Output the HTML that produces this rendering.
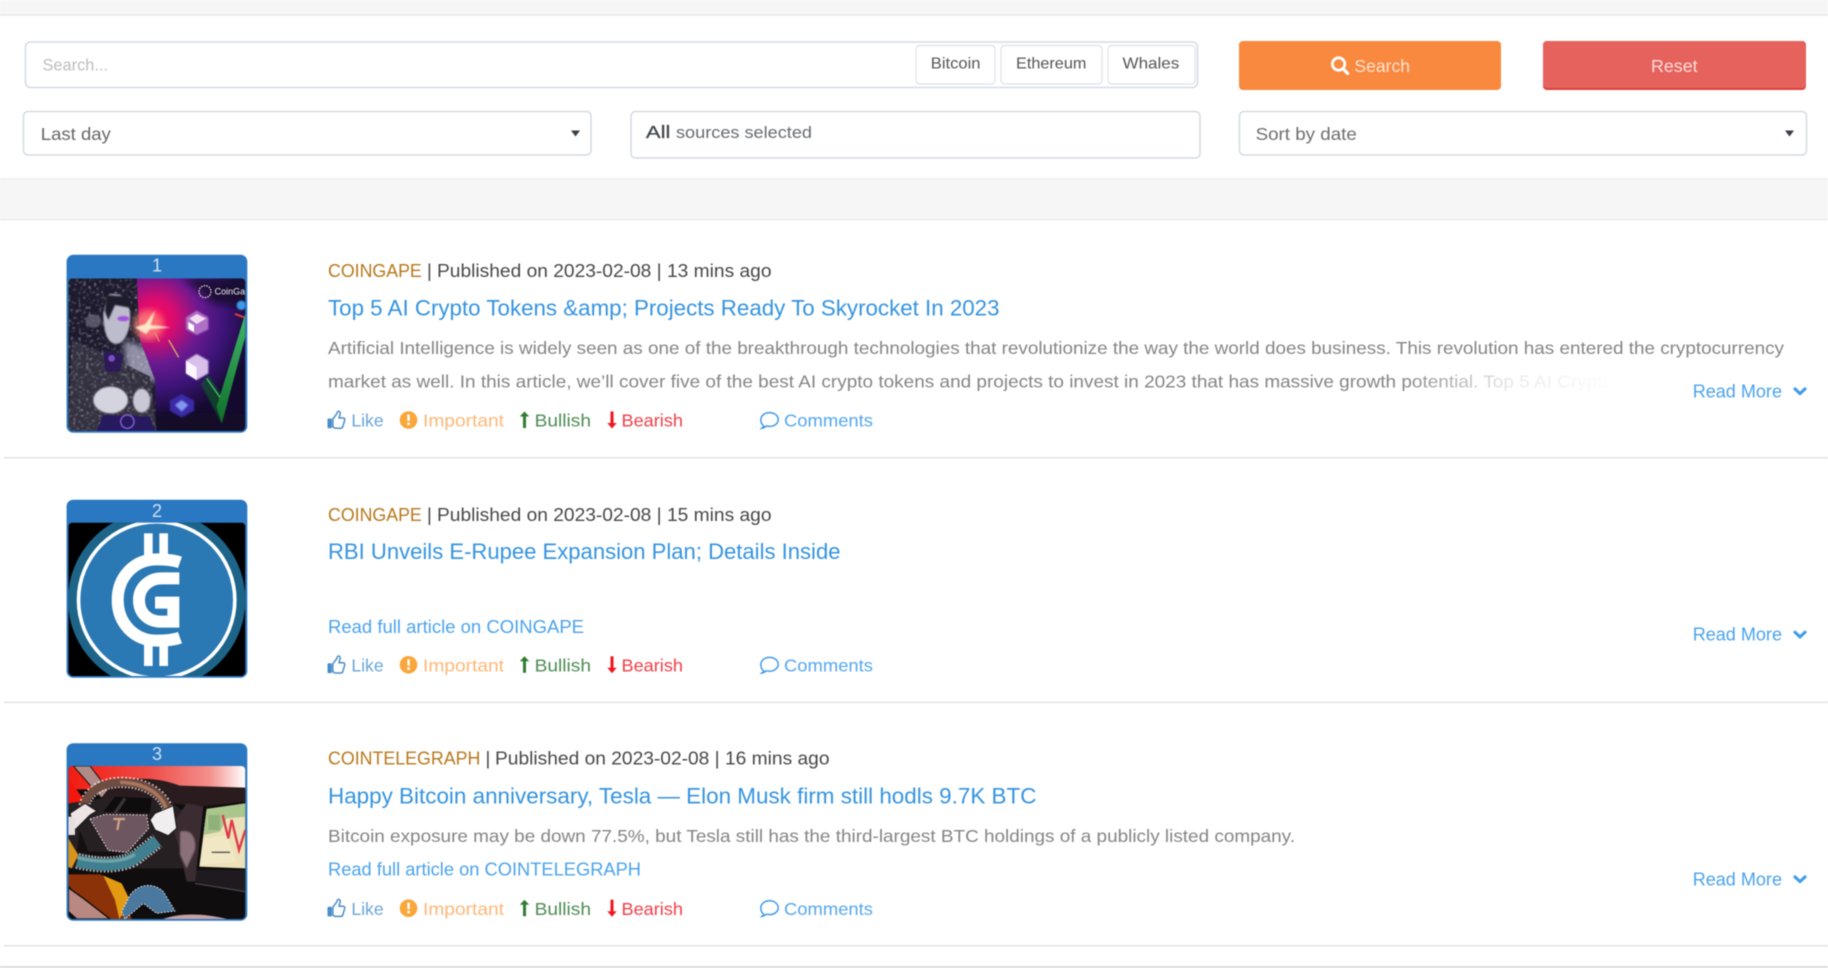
<!DOCTYPE html>
<html lang="en"><head><meta charset="utf-8"><title>News feed</title>
<style>
html,body{margin:0;padding:0;background:#fff;width:1828px;height:968px;overflow:hidden}
svg{display:block;filter:blur(.45px)}
text{font-family:"Liberation Sans",sans-serif}
</style></head><body>
<svg xmlns="http://www.w3.org/2000/svg" width="1828" height="968" viewBox="0 0 1828 968">
<defs>
<linearGradient id="fade" x1="0" x2="1" y1="0" y2="0"><stop offset="0" stop-color="#fff" stop-opacity="0"/><stop offset=".5" stop-color="#fff" stop-opacity=".82"/><stop offset="1" stop-color="#fff"/></linearGradient>
<radialGradient id="pink" gradientUnits="userSpaceOnUse" cx="345" cy="235" r="300"><stop offset="0" stop-color="#ff0a5a"/><stop offset=".2" stop-color="#d80c70"/><stop offset=".45" stop-color="#6a1a90"/><stop offset=".7" stop-color="#3c1478"/><stop offset="1" stop-color="#140a30"/></radialGradient>
<linearGradient id="vg" x1="0" x2="0" y1="0" y2="1"><stop offset="0" stop-color="#3fb868"/><stop offset="1" stop-color="#0f6e2a"/></linearGradient>
<linearGradient id="sky" x1="0" x2="1" y1="0" y2="0"><stop offset="0" stop-color="#f21c10"/><stop offset=".45" stop-color="#ee4a45"/><stop offset=".8" stop-color="#f4908c"/><stop offset="1" stop-color="#fff"/></linearGradient>
<clipPath id="c1"><rect x="85" y="115" width="531" height="458" rx="12"/></clipPath>
<clipPath id="c2"><rect x="85" y="98" width="531" height="460" rx="12"/></clipPath>
<clipPath id="c3"><rect x="85" y="93" width="531" height="459" rx="12"/></clipPath>
<clipPath id="woman"><path d="M85 115 H290 L300 300 L345 420 L350 573 H85z"/></clipPath>
<filter id="b2"><feGaussianBlur stdDeviation="2.5"/></filter>
<filter id="b8"><feGaussianBlur stdDeviation="10"/></filter>
<filter id="speck" x="0" y="0" width="100%" height="100%"><feTurbulence type="fractalNoise" baseFrequency=".13" numOctaves="2" seed="4"/><feColorMatrix values="0 0 0 0 .62  0 0 0 0 .6  0 0 0 0 .72  4 0 0 0 -2.2"/><feGaussianBlur stdDeviation="1.5"/></filter>
</defs>

<!-- page background -->
<rect width="1828" height="968" fill="#fff"/>
<rect width="1828" height="15" fill="#f6f6f6"/>
<rect y="14" width="1828" height="2" fill="#ececec"/>
<rect y="178" width="1828" height="42" fill="#f6f6f6"/>
<rect y="178" width="1828" height="1.6" fill="#eeeeee"/>
<rect y="219" width="1828" height="1.5" fill="#ececec"/>

<!-- search row -->
<rect x="25.5" y="42" width="1172" height="45.5" rx="5" fill="#fff" stroke="#d5dbe6" stroke-width="1.6"/>
<text x="42.5" y="70.3" font-size="17" fill="#bdbdbd" textLength="65.5" lengthAdjust="spacingAndGlyphs">Search...</text>
<rect x="916" y="45.5" width="79" height="38.5" rx="3.5" fill="#fff" stroke="#e2e6ec" stroke-width="1.4"/>
<rect x="1001" y="45.5" width="101" height="38.5" rx="3.5" fill="#fff" stroke="#e2e6ec" stroke-width="1.4"/>
<rect x="1108" y="45.5" width="87" height="38.5" rx="3.5" fill="#fff" stroke="#e2e6ec" stroke-width="1.4"/>
<text x="930.8" y="68.7" font-size="16" fill="#555" textLength="49.7" lengthAdjust="spacingAndGlyphs">Bitcoin</text>
<text x="1016" y="68.7" font-size="16" fill="#555" textLength="70.4" lengthAdjust="spacingAndGlyphs">Ethereum</text>
<text x="1122.5" y="68.7" font-size="16" fill="#555" textLength="56.8" lengthAdjust="spacingAndGlyphs">Whales</text>

<rect x="1239" y="41" width="262" height="49" rx="4" fill="#f8893f"/>
<circle cx="1338.6" cy="64" r="6.2" fill="none" stroke="#fff" stroke-width="2.8"/>
<line x1="1343" y1="68.6" x2="1347.6" y2="73.4" stroke="#fff" stroke-width="3.2" stroke-linecap="round"/>
<text x="1354.4" y="72" font-size="17.5" fill="#fde3d0" textLength="55.6" lengthAdjust="spacingAndGlyphs">Search</text>
<rect x="1543" y="41" width="263" height="49" rx="4" fill="#e0403a"/>
<rect x="1543" y="41" width="263" height="47" rx="4" fill="#e6625c"/>
<text x="1651" y="72" font-size="17.5" fill="#fbdedc" textLength="46.6" lengthAdjust="spacingAndGlyphs">Reset</text>

<!-- filter row -->
<rect x="23.5" y="111.5" width="567.5" height="43.5" rx="4.5" fill="#fff" stroke="#d5dbe2" stroke-width="1.5"/>
<text x="40.8" y="140" font-size="17.5" fill="#666" textLength="70" lengthAdjust="spacingAndGlyphs">Last day</text>
<path d="M571 130.5h9l-4.5 6z" fill="#3a3f46"/>
<rect x="631" y="111.5" width="569" height="46.5" rx="4.5" fill="#fff" stroke="#d5dbe2" stroke-width="1.5"/>
<text x="645.9" y="138" font-size="17.5" fill="#3f454b" stroke="#3f454b" stroke-width=".25" textLength="24.5" lengthAdjust="spacingAndGlyphs">All</text>
<text x="676" y="138" font-size="17" fill="#666b70" textLength="136" lengthAdjust="spacingAndGlyphs">sources selected</text>
<rect x="1239.5" y="111.5" width="567" height="43.5" rx="4.5" fill="#fff" stroke="#d5dbe2" stroke-width="1.5"/>
<text x="1255.6" y="140" font-size="17.5" fill="#6e6e6e" textLength="101.2" lengthAdjust="spacingAndGlyphs">Sort by date</text>
<path d="M1785 130.5h9l-4.5 6z" fill="#3a3f46"/>

<!-- ===== card 1 ===== -->
<g transform="translate(40,240) scale(.33333)">
<rect x="80" y="47" width="540" height="530" rx="18" fill="#2b78c2"/>
<g clip-path="url(#c1)">
<rect x="85" y="115" width="531" height="458" fill="url(#pink)"/>
<path d="M430 115 H616 V200 L520 190z" fill="#160a2c" opacity=".8" filter="url(#b8)"/>
<path d="M350 520 H616 V573 H350z" fill="#120a28" opacity=".85" filter="url(#b8)"/>
<g clip-path="url(#woman)">
<rect x="85" y="115" width="270" height="458" fill="#1c1a2c"/>
<path d="M250 300 L345 330 L360 430 L260 400z" fill="#8f8ea6" filter="url(#b8)"/>
<path d="M95 300 L190 340 L330 410 L350 573 H85z" fill="#33303f"/>
<rect x="85" y="115" width="270" height="458" filter="url(#speck)" opacity=".6"/>
<path d="M190 330 L250 345 L240 395 L195 395z" fill="#2d1a58"/>
<circle cx="215" cy="355" r="10" fill="#8a5ee0" opacity=".8"/>
</g>
<path d="M205 165 C250 150 275 195 270 240 C268 285 245 320 220 310 C195 300 190 255 190 220z" fill="#bdbccd" filter="url(#b2)"/>
<path d="M200 165 L265 170 L280 205 L225 195 L205 240 L195 215z" fill="#1f1c2c" filter="url(#b2)"/>
<ellipse cx="250" cy="236" rx="18" ry="8" fill="#a050e0" filter="url(#b2)"/>
<ellipse cx="160" cy="243" rx="24" ry="20" fill="#6e6c7c" opacity=".7" filter="url(#b2)"/>
<ellipse cx="212" cy="480" rx="52" ry="40" fill="#d4d4de" filter="url(#b2)"/>
<ellipse cx="305" cy="482" rx="26" ry="36" fill="#c8c8d6" filter="url(#b2)"/>
<path d="M190 525 L330 530 L345 573 H170z" fill="#27195e"/>
<circle cx="262" cy="545" r="20" fill="none" stroke="#7a55c8" stroke-width="5"/>
<circle cx="325" cy="255" r="45" fill="#ff8a7a" opacity=".75" filter="url(#b8)"/>
<path d="M285 262 L316 252 L345 212 L332 255 L392 262 L330 268 L318 282z" fill="#ffe7c8" filter="url(#b2)"/>
<path d="M386 300 L416 352" stroke="#d8b060" stroke-width="4"/>
<path d="M345 278 L358 305" stroke="#d8b060" stroke-width="3"/>
<path d="M470 212 L505 232 L505 268 L470 285 L438 268 L438 232z" fill="#b070c8" filter="url(#b2)"/>
<path d="M470 222 L498 236 L470 252 L448 236z" fill="#f2dcf0"/>
<path d="M445 246 L462 256 L462 276 L445 266z" fill="#fff"/>
<path d="M470 342 L505 362 L505 400 L470 420 L438 400 L438 362z" fill="#d8c0ea" filter="url(#b2)"/>
<path d="M470 382 L470 420 L438 400 L438 362z" fill="#fbf6ff"/>
<path d="M425 462 L462 482 L462 512 L425 532 L390 512 L390 482z" fill="#3a2ca8" filter="url(#b2)"/>
<path d="M425 480 L445 495 L425 515 L405 495z" fill="#8296f0" filter="url(#b2)"/>
<path d="M482 432 L545 550 L562 490 L505 405z" fill="#0e5a2c" opacity=".65" filter="url(#b2)"/>
<path d="M530 500 L545 550 L616 290 V220z" fill="url(#vg)"/>
<path d="M500 415 L540 472" stroke="#4cc068" stroke-width="4"/>
<circle cx="604" cy="196" r="14" fill="#3a9ae8" filter="url(#b2)"/>
<path d="M585 222 L612 232" stroke="#e04030" stroke-width="6"/>
<circle cx="495" cy="155" r="18" fill="none" stroke="#fff" stroke-width="3" stroke-dasharray="5 3"/>
<text x="524" y="164" font-size="27" fill="#eee">CoinGap</text>
</g>
</g>
<rect x="67.5" y="255.5" width="179" height="176.5" rx="6" fill="none" stroke="#2b78c2" stroke-width="1.6"/>
<text x="157" y="271.7" font-size="18" fill="#d0e1f3" text-anchor="middle">1</text>

<text x="328" y="277" font-size="18.5" fill="#b8781c" textLength="93.8" lengthAdjust="spacingAndGlyphs">COINGAPE</text>
<text x="427" y="277" font-size="18.5" fill="#444">|</text>
<text x="437" y="277" font-size="18.5" fill="#484848" textLength="334.5" lengthAdjust="spacingAndGlyphs">Published on 2023-02-08 | 13 mins ago</text>
<text x="328" y="315.7" font-size="22.5" fill="#3594e0" textLength="671.5" lengthAdjust="spacingAndGlyphs">Top 5 AI Crypto Tokens &amp;amp; Projects Ready To Skyrocket In 2023</text>
<text x="328" y="354" font-size="17.5" fill="#858585" textLength="1456" lengthAdjust="spacingAndGlyphs">Artificial Intelligence is widely seen as one of the breakthrough technologies that revolutionize the way the world does business. This revolution has entered the cryptocurrency</text>
<text x="328" y="387.6" font-size="17.5" fill="#858585" textLength="1285" lengthAdjust="spacingAndGlyphs">market as well. In this article, we’ll cover five of the best AI crypto tokens and projects to invest in 2023 that has massive growth potential. Top 5 AI Crypto</text>
<rect x="1400" y="368" width="220" height="28" fill="url(#fade)"/>
<text x="1692.7" y="397.3" font-size="18" fill="#4ba3ec" textLength="89.3" lengthAdjust="spacingAndGlyphs">Read More</text>
<path d="M1794 388l6 5.6 6-5.6" fill="none" stroke="#3f9be8" stroke-width="3"/>

<g>
<path d="M332.8 419 L336.5 414.2 C337 412.6 337.5 411.2 338.5 411.2 C340 411.2 340.5 413 340 414.6 L339 418 L343.2 418 C344.6 418 345 419.2 344.6 420.5 L342.8 426.6 C342.5 427.8 341.8 428.2 340.8 428.2 L335.3 428.2 L332.8 427z" fill="none" stroke="#4a8cc9" stroke-width="1.5" stroke-linejoin="round"/>
<rect x="327.5" y="418.5" width="4.3" height="9.8" rx="1" fill="#4a8cc9"/>
<text x="351.4" y="426.7" font-size="17.5" fill="#6aa5d8" textLength="32.2" lengthAdjust="spacingAndGlyphs">Like</text>
<circle cx="408.5" cy="420" r="8.8" fill="#f9a63a"/>
<rect x="407.3" y="414.5" width="2.5" height="6.5" fill="#fff"/><rect x="407.3" y="422.5" width="2.5" height="2.6" fill="#fff"/>
<text x="423" y="426.7" font-size="17.5" fill="#fdb878" textLength="81" lengthAdjust="spacingAndGlyphs">Important</text>
<path d="M524.5 428V415" stroke="#2e7d32" stroke-width="3"/><path d="M519.8 416.5l4.7-5 4.7 5z" fill="#2e7d32"/>
<text x="534.6" y="426.7" font-size="17.5" fill="#4e8c55" textLength="56.4" lengthAdjust="spacingAndGlyphs">Bullish</text>
<path d="M612 411.5V424" stroke="#f5141e" stroke-width="3"/><path d="M607.3 423l4.7 5.5 4.7-5.5z" fill="#f5141e"/>
<text x="621.5" y="426.7" font-size="17.5" fill="#f23e48" textLength="61.5" lengthAdjust="spacingAndGlyphs">Bearish</text>
<path d="M764 426.5 C762 424.8 760.8 422.3 760.8 419.8 C760.8 415.6 764.8 412.6 769.6 412.6 C774.4 412.6 778.2 415.6 778.2 419.5 C778.2 423.4 774.4 426.4 769.6 426.4 C768.4 426.4 767.4 426.2 766.4 426 C765.2 427 763.5 428 761.8 428.2 C762.8 427.4 763.6 427 764 426.5z" fill="none" stroke="#3f9be8" stroke-width="1.5"/>
<text x="784" y="426.7" font-size="17.5" fill="#55a7ee" textLength="89" lengthAdjust="spacingAndGlyphs">Comments</text>
</g>
<rect x="4" y="457" width="1824" height="1.6" fill="#e4e4e6"/>

<!-- ===== card 2 ===== -->
<g transform="translate(40,490) scale(.33333)">
<rect x="80" y="30" width="540" height="532" rx="18" fill="#2b78c2"/>
<g clip-path="url(#c2)">
<rect x="85" y="98" width="531" height="460" fill="#000"/>
<circle cx="350" cy="330" r="266" fill="#1d6488"/>
<circle cx="350" cy="330" r="240" fill="#fff"/>
<circle cx="350" cy="330" r="229" fill="#2a78b4"/>
<rect x="312" y="130" width="26" height="70" fill="#fff"/><rect x="358" y="130" width="26" height="70" fill="#fff"/>
<rect x="312" y="460" width="26" height="68" fill="#fff"/><rect x="358" y="460" width="26" height="68" fill="#fff"/>
<path d="M420 217 C400 210 380 208 350 208 C282 208 233 262 233 330 C233 398 282 452 350 452 C380 452 400 450 420 443" fill="none" stroke="#fff" stroke-width="36"/>
<path d="M418 265 L365 265 C325 265 297 295 297 330 C297 370 325 395 365 395 L400 395 L400 338 L345 338" fill="none" stroke="#fff" stroke-width="36"/>
</g>
</g>
<rect x="67.5" y="500.5" width="179" height="176.5" rx="6" fill="none" stroke="#2b78c2" stroke-width="1.6"/>
<text x="157" y="517" font-size="18" fill="#d0e1f3" text-anchor="middle">2</text>

<text x="328" y="521" font-size="18.5" fill="#b8781c" textLength="93.8" lengthAdjust="spacingAndGlyphs">COINGAPE</text>
<text x="427" y="521" font-size="18.5" fill="#444">|</text>
<text x="437" y="521" font-size="18.5" fill="#484848" textLength="334.5" lengthAdjust="spacingAndGlyphs">Published on 2023-02-08 | 15 mins ago</text>
<text x="328" y="559" font-size="22.5" fill="#3594e0" textLength="512.5" lengthAdjust="spacingAndGlyphs">RBI Unveils E-Rupee Expansion Plan; Details Inside</text>
<text x="328" y="632.8" font-size="18" fill="#4ba3ec" textLength="256" lengthAdjust="spacingAndGlyphs">Read full article on COINGAPE</text>
<text x="1692.7" y="640.6" font-size="18" fill="#4ba3ec" textLength="89.3" lengthAdjust="spacingAndGlyphs">Read More</text>
<path d="M1794 631.3l6 5.6 6-5.6" fill="none" stroke="#3f9be8" stroke-width="3"/>

<g transform="translate(0,244.8)">
<path d="M332.8 419 L336.5 414.2 C337 412.6 337.5 411.2 338.5 411.2 C340 411.2 340.5 413 340 414.6 L339 418 L343.2 418 C344.6 418 345 419.2 344.6 420.5 L342.8 426.6 C342.5 427.8 341.8 428.2 340.8 428.2 L335.3 428.2 L332.8 427z" fill="none" stroke="#4a8cc9" stroke-width="1.5" stroke-linejoin="round"/>
<rect x="327.5" y="418.5" width="4.3" height="9.8" rx="1" fill="#4a8cc9"/>
<text x="351.4" y="426.7" font-size="17.5" fill="#6aa5d8" textLength="32.2" lengthAdjust="spacingAndGlyphs">Like</text>
<circle cx="408.5" cy="420" r="8.8" fill="#f9a63a"/>
<rect x="407.3" y="414.5" width="2.5" height="6.5" fill="#fff"/><rect x="407.3" y="422.5" width="2.5" height="2.6" fill="#fff"/>
<text x="423" y="426.7" font-size="17.5" fill="#fdb878" textLength="81" lengthAdjust="spacingAndGlyphs">Important</text>
<path d="M524.5 428V415" stroke="#2e7d32" stroke-width="3"/><path d="M519.8 416.5l4.7-5 4.7 5z" fill="#2e7d32"/>
<text x="534.6" y="426.7" font-size="17.5" fill="#4e8c55" textLength="56.4" lengthAdjust="spacingAndGlyphs">Bullish</text>
<path d="M612 411.5V424" stroke="#f5141e" stroke-width="3"/><path d="M607.3 423l4.7 5.5 4.7-5.5z" fill="#f5141e"/>
<text x="621.5" y="426.7" font-size="17.5" fill="#f23e48" textLength="61.5" lengthAdjust="spacingAndGlyphs">Bearish</text>
<path d="M764 426.5 C762 424.8 760.8 422.3 760.8 419.8 C760.8 415.6 764.8 412.6 769.6 412.6 C774.4 412.6 778.2 415.6 778.2 419.5 C778.2 423.4 774.4 426.4 769.6 426.4 C768.4 426.4 767.4 426.2 766.4 426 C765.2 427 763.5 428 761.8 428.2 C762.8 427.4 763.6 427 764 426.5z" fill="none" stroke="#3f9be8" stroke-width="1.5"/>
<text x="784" y="426.7" font-size="17.5" fill="#55a7ee" textLength="89" lengthAdjust="spacingAndGlyphs">Comments</text>
</g>
<rect x="4" y="701.5" width="1824" height="1.6" fill="#e4e4e6"/>

<!-- ===== card 3 ===== -->
<g transform="translate(40,735) scale(.33333)">
<rect x="80" y="26" width="540" height="530" rx="18" fill="#2b78c2"/>
<g clip-path="url(#c3)">
<rect x="85" y="93" width="531" height="459" fill="#100d0e"/>
<rect x="85" y="93" width="531" height="70" fill="url(#sky)"/>
<path d="M190 150 C290 120 360 130 420 152 L616 158 V200 L480 215 L400 205 L190 200z" fill="#2a1c1e"/>
<path d="M85 130 L140 205 L85 212z" fill="#f2160c"/>
<path d="M150 93 L205 165 L185 190 L100 93z" fill="#b08c88" stroke="#1a1212" stroke-width="3"/>
<path d="M85 205 L190 190 L400 205 L440 240 L440 400 L85 400z" fill="#262022"/>
<path d="M440 205 L490 215 L470 395 L470 440 L440 440 L415 330 L395 270z" fill="#3a2c30"/>
<path d="M420 290 C455 280 470 310 465 345 L440 400 L420 360z" fill="#8a7078" filter="url(#b2)"/>
<path d="M470 405 L616 405 V470 L465 440z" fill="#1e1a20"/>
<path d="M465 445 L616 470" stroke="#4a4448" stroke-width="4"/>
<path d="M130 235 C130 175 180 142 245 142 C320 142 375 180 385 230" fill="none" stroke="#fff" stroke-width="34" stroke-dasharray="5 6" opacity=".75"/>
<path d="M130 235 C130 175 180 142 245 142 C320 142 375 180 385 230" fill="none" stroke="#6e4c40" stroke-width="24"/>
<path d="M240 142 C310 142 365 175 380 225" fill="none" stroke="#a8765c" stroke-width="11"/>
<path d="M190 230 L225 185 L335 190 L330 235z" fill="#0e0c0d"/>
<path d="M255 190 L225 235" stroke="#3a3236" stroke-width="10"/>
<path d="M150 252 L195 238 L320 240 L326 280 L262 352 L205 346z" fill="#6e5660" stroke="#fff" stroke-width="2.5" stroke-dasharray="5 5"/>
<path d="M220 252 L255 252 M238 252 L232 285" stroke="#cfa084" stroke-width="7" fill="none"/>
<path d="M120 285 L145 350 L205 350 L255 358 L320 310 L335 340 L280 385 L110 350z" fill="#141011"/>
<path d="M330 255 L345 235 L400 212 L410 280 L385 302 L345 285z" fill="#f1eef0" stroke="#151515" stroke-width="3"/>
<path d="M90 235 L135 205 L170 228 L150 240 L105 285z" fill="#efe4e4" stroke="#151515" stroke-width="3"/>
<rect x="85" y="245" width="20" height="55" fill="#e9dede"/>
<path d="M112 378 C180 395 255 392 290 365 L352 318" fill="none" stroke="#fff" stroke-width="48" stroke-dasharray="5 5" opacity=".7"/>
<path d="M112 378 C180 395 255 392 290 365 L352 318" fill="none" stroke="#3f7f90" stroke-width="36"/>
<path d="M112 368 C180 385 250 382 285 358" fill="none" stroke="#6fa2a8" stroke-width="10"/>
<path d="M85 310 L115 360 L95 400 L85 395z" fill="#d8941a"/>
<path d="M85 418 L180 418 L240 445 L275 552 L170 552 L85 450z" fill="#8c3208"/>
<path d="M190 422 L245 445 L272 500 L238 552 L225 495z" fill="#e29a12"/>
<path d="M85 458 L130 490 L210 552 H110 L85 530z" fill="#b98880" stroke="#120c0c" stroke-width="4"/>
<path d="M270 480 C300 442 345 445 370 470 L405 528 L350 535 L310 505 L255 552 L245 530z" fill="#4a789e" stroke="#fff" stroke-width="2.5" stroke-dasharray="5 5"/>
<path d="M370 552 C420 532 500 536 560 552z" fill="#c8a0a8"/>
<path d="M478 395 L500 222 L616 205 V400 z" fill="#ece1b8"/>
<path d="M500 222 L616 205 V245 L560 250 L540 290 L490 300z" fill="#aac68c"/>
<path d="M490 310 L560 300 L590 380 L480 390z" fill="#f0e8c4"/>
<path d="M548 240 L565 310 L575 255 L597 345 L616 285" fill="none" stroke="#e03a4a" stroke-width="7"/>
<path d="M515 352 H570" stroke="#555" stroke-width="4"/>
<rect x="505" y="240" width="35" height="45" fill="#7da36e" opacity=".6"/>
</g>
</g>
<rect x="67.5" y="744" width="179" height="176" rx="6" fill="none" stroke="#2b78c2" stroke-width="1.6"/>
<text x="157" y="760" font-size="18" fill="#d0e1f3" text-anchor="middle">3</text>

<text x="328" y="764.6" font-size="18.5" fill="#b8781c" textLength="152.3" lengthAdjust="spacingAndGlyphs">COINTELEGRAPH</text>
<text x="485.5" y="764.6" font-size="18.5" fill="#444">|</text>
<text x="495" y="764.6" font-size="18.5" fill="#484848" textLength="334.5" lengthAdjust="spacingAndGlyphs">Published on 2023-02-08 | 16 mins ago</text>
<text x="328" y="803.3" font-size="22.5" fill="#3594e0" textLength="708.4" lengthAdjust="spacingAndGlyphs">Happy Bitcoin anniversary, Tesla — Elon Musk firm still hodls 9.7K BTC</text>
<text x="328" y="842" font-size="17.5" fill="#858585" textLength="967" lengthAdjust="spacingAndGlyphs">Bitcoin exposure may be down 77.5%, but Tesla still has the third-largest BTC holdings of a publicly listed company.</text>
<text x="328" y="875.4" font-size="18" fill="#4ba3ec" textLength="313" lengthAdjust="spacingAndGlyphs">Read full article on COINTELEGRAPH</text>
<text x="1692.7" y="885.4" font-size="18" fill="#4ba3ec" textLength="89.3" lengthAdjust="spacingAndGlyphs">Read More</text>
<path d="M1794 876l6 5.6 6-5.6" fill="none" stroke="#3f9be8" stroke-width="3"/>

<g transform="translate(0,488.2)">
<path d="M332.8 419 L336.5 414.2 C337 412.6 337.5 411.2 338.5 411.2 C340 411.2 340.5 413 340 414.6 L339 418 L343.2 418 C344.6 418 345 419.2 344.6 420.5 L342.8 426.6 C342.5 427.8 341.8 428.2 340.8 428.2 L335.3 428.2 L332.8 427z" fill="none" stroke="#4a8cc9" stroke-width="1.5" stroke-linejoin="round"/>
<rect x="327.5" y="418.5" width="4.3" height="9.8" rx="1" fill="#4a8cc9"/>
<text x="351.4" y="426.7" font-size="17.5" fill="#6aa5d8" textLength="32.2" lengthAdjust="spacingAndGlyphs">Like</text>
<circle cx="408.5" cy="420" r="8.8" fill="#f9a63a"/>
<rect x="407.3" y="414.5" width="2.5" height="6.5" fill="#fff"/><rect x="407.3" y="422.5" width="2.5" height="2.6" fill="#fff"/>
<text x="423" y="426.7" font-size="17.5" fill="#fdb878" textLength="81" lengthAdjust="spacingAndGlyphs">Important</text>
<path d="M524.5 428V415" stroke="#2e7d32" stroke-width="3"/><path d="M519.8 416.5l4.7-5 4.7 5z" fill="#2e7d32"/>
<text x="534.6" y="426.7" font-size="17.5" fill="#4e8c55" textLength="56.4" lengthAdjust="spacingAndGlyphs">Bullish</text>
<path d="M612 411.5V424" stroke="#f5141e" stroke-width="3"/><path d="M607.3 423l4.7 5.5 4.7-5.5z" fill="#f5141e"/>
<text x="621.5" y="426.7" font-size="17.5" fill="#f23e48" textLength="61.5" lengthAdjust="spacingAndGlyphs">Bearish</text>
<path d="M764 426.5 C762 424.8 760.8 422.3 760.8 419.8 C760.8 415.6 764.8 412.6 769.6 412.6 C774.4 412.6 778.2 415.6 778.2 419.5 C778.2 423.4 774.4 426.4 769.6 426.4 C768.4 426.4 767.4 426.2 766.4 426 C765.2 427 763.5 428 761.8 428.2 C762.8 427.4 763.6 427 764 426.5z" fill="none" stroke="#3f9be8" stroke-width="1.5"/>
<text x="784" y="426.7" font-size="17.5" fill="#55a7ee" textLength="89" lengthAdjust="spacingAndGlyphs">Comments</text>
</g>
<rect x="4" y="945" width="1824" height="1.6" fill="#e4e4e6"/>
<rect y="966" width="1828" height="2" fill="#dcdcdc"/>
</svg>
</body></html>
